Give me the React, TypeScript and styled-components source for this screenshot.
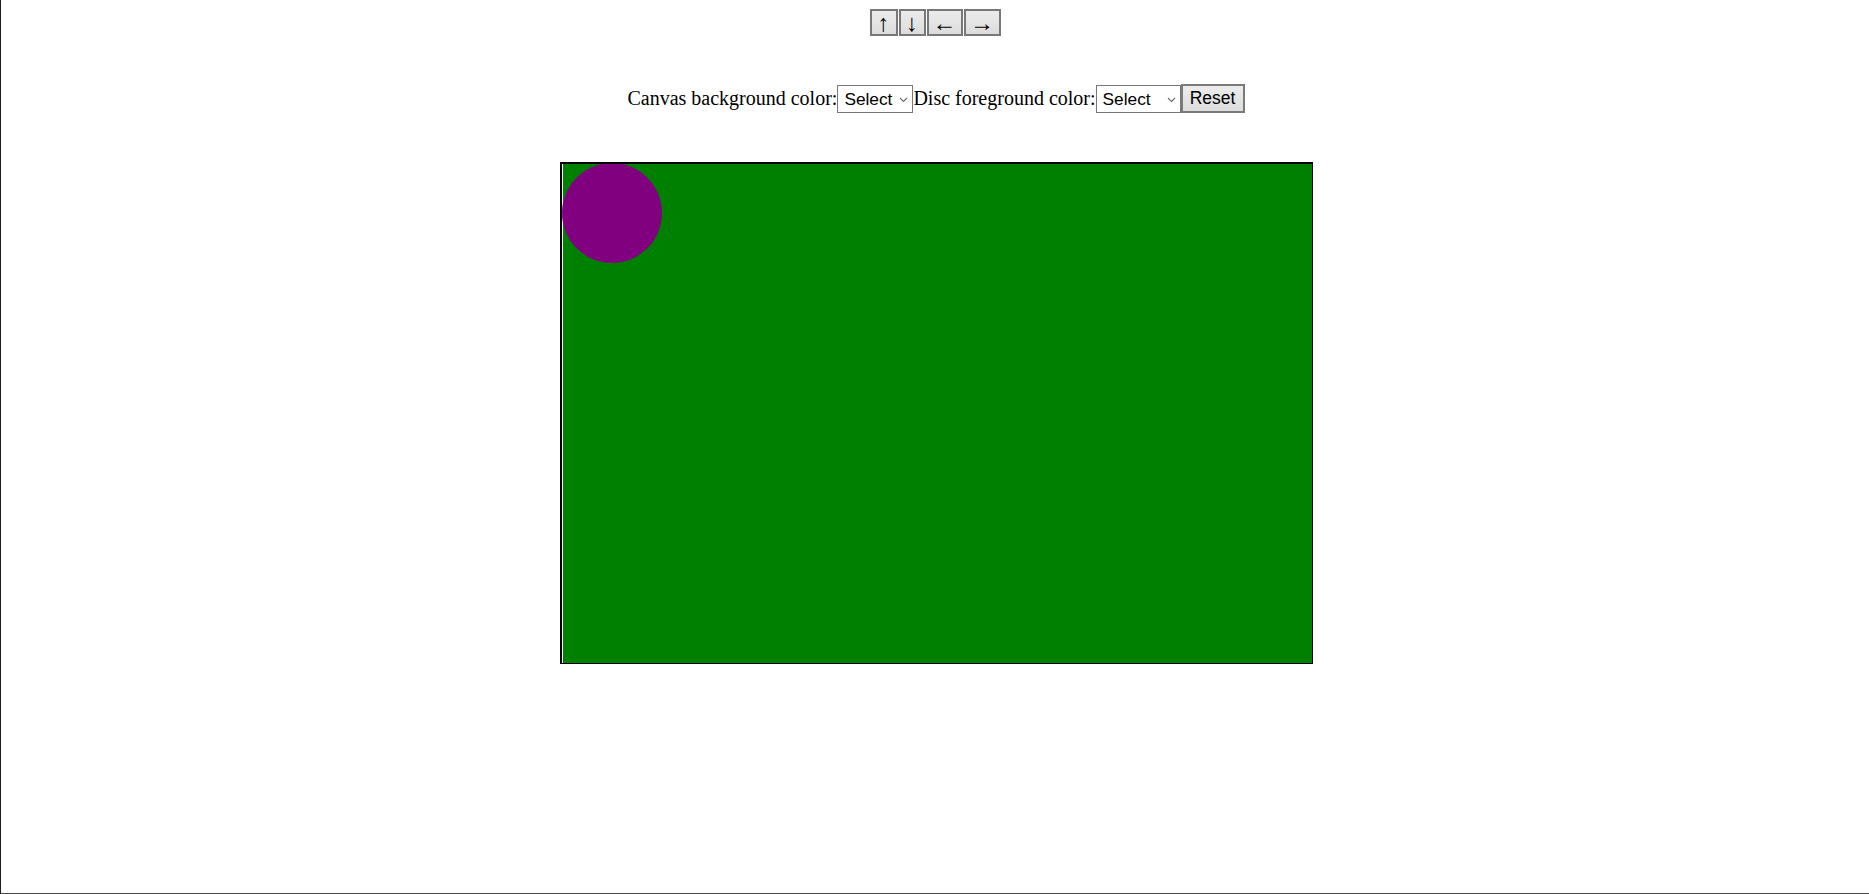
import React from "react";
import styled, { createGlobalStyle } from "styled-components";

const Global = createGlobalStyle`
  html, body { margin: 0; padding: 0; background: #fff; }
  body { font-family: "Liberation Serif", "Times New Roman", serif; color: #000; }
`;

const Page = styled.div`
  box-sizing: border-box;
  width: 100%;
  height: 894px;
  border-left: 1px solid #1c1c1c;
  border-bottom: 1px solid #4a4a4a;
  display: flex;
  flex-direction: column;
  align-items: center;
`;

const ArrowBar = styled.div`
  margin-top: 9px;
  display: flex;
  gap: 1px;
`;

const ArrowButton = styled.button<{ $w: number }>`
  box-sizing: border-box;
  width: ${(p) => p.$w}px;
  height: 27px;
  padding: 0;
  border: 2px solid #787878;
  background: linear-gradient(#ececec, #dcdcdc);
  font-family: "Liberation Serif", "DejaVu Serif", serif;
  font-size: 24px;
  line-height: 1;
  color: #000;
  display: flex;
  align-items: center;
  justify-content: center;
`;

const ControlRow = styled.div`
  margin-top: 48px;
  height: 29px;
  display: flex;
  align-items: center;
  margin-left: 2px;
`;

const Label = styled.span`
  font-family: "Liberation Serif", "Times New Roman", serif;
  font-size: 20px;
  white-space: nowrap;
`;

const SelectWrap = styled.div<{ $w: number }>`
  position: relative;
  width: ${(p) => p.$w}px;
  height: 28px;
`;

const NativeSelect = styled.select<{ $pl: number }>`
  box-sizing: border-box;
  appearance: none;
  -webkit-appearance: none;
  width: 100%;
  height: 100%;
  margin: 0;
  border: 1px solid #767676;
  border-radius: 0;
  background: #fff;
  padding: 0 0 0 ${(p) => p.$pl}px;
  font-family: "Liberation Sans", Arial, sans-serif;
  font-size: 17.3px;
  color: #000;
`;

const Chevron = styled.svg`
  position: absolute;
  right: 5px;
  top: 12px;
  pointer-events: none;
`;

const ResetButton = styled.button`
  box-sizing: border-box;
  width: 64px;
  height: 29px;
  margin: 0;
  padding: 0;
  border: 2px solid #7a7a7a;
  background: linear-gradient(#ededed, #dcdcdc);
  font-family: "Liberation Sans", Arial, sans-serif;
  font-size: 17.5px;
  color: #000;
`;

const CanvasFrame = styled.div`
  margin-top: 49px;
  margin-left: 2px;
  width: 753px;
  height: 502px;
  box-sizing: border-box;
  border-style: solid;
  border-color: #000;
  border-width: 2px 1px 1px 2px;
  background: #fff;
  overflow: hidden;
  display: flex;
`;

function ColorSelect({ w, pl }: { w: number; pl: number }) {
  return (
    <SelectWrap $w={w}>
      <NativeSelect $pl={pl} defaultValue="">
        <option value="">Select</option>
        <option value="red">Red</option>
        <option value="green">Green</option>
        <option value="blue">Blue</option>
        <option value="purple">Purple</option>
      </NativeSelect>
      <Chevron width="9" height="6" viewBox="0 0 9 6">
        <path d="M1 1 L4.5 4.5 L8 1" fill="none" stroke="#6d6d6d" strokeWidth="1.1" />
      </Chevron>
    </SelectWrap>
  );
}

export default function App() {
  return (
    <>
      <Global />
      <Page>
        <ArrowBar>
          <ArrowButton $w={28}>↑</ArrowButton>
          <ArrowButton $w={27}>↓</ArrowButton>
          <ArrowButton $w={36}>←</ArrowButton>
          <ArrowButton $w={37}>→</ArrowButton>
        </ArrowBar>
        <ControlRow>
          <Label>Canvas background color:</Label>
          <ColorSelect w={76} pl={6} />
          <Label>Disc foreground color:</Label>
          <ColorSelect w={85} pl={6} />
          <ResetButton>Reset</ResetButton>
        </ControlRow>
        <CanvasFrame>
          <svg width="750" height="499" viewBox="0 0 750 499">
            <rect x="1" y="0" width="749" height="499" fill="#008000" />
            <circle cx="50" cy="49" r="50" fill="#800080" />
          </svg>
        </CanvasFrame>
      </Page>
    </>
  );
}
